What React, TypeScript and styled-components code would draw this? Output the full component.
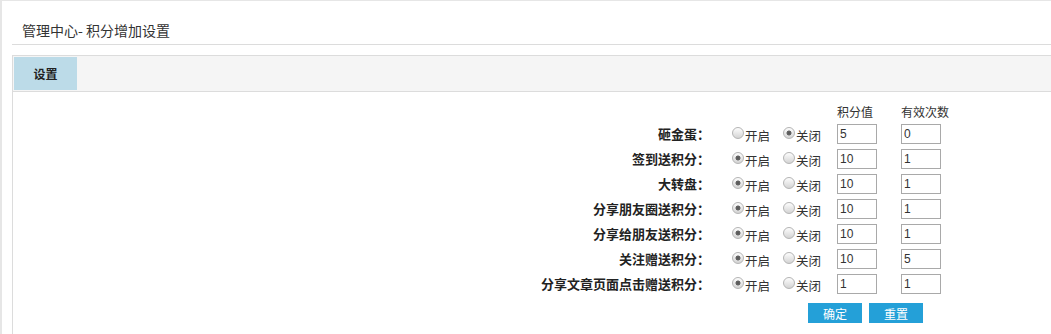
import React from "react";
import styled, { createGlobalStyle } from "styled-components";

const GlobalStyle = createGlobalStyle`
    body {
        margin: 0;
        background: #fff;
        color: #333;
        font-family: "Noto Sans CJK SC", "Liberation Sans", sans-serif;
        font-size: 12px;
    }
`

const Page = styled.div`
    border-top: 1px solid #e6e6e6;
    border-left: 2px solid #e6e6e6;
    padding-left: 10px;
    min-height: 333px;
    box-sizing: border-box;
`

const TitleBar = styled.div`
    padding: 20px 0 5px 10px;
    line-height: 18px;
    font-size: 14px;
    color: #333;
    border-bottom: 1px solid #dcdcdc;
`

const Panel = styled.div`
    margin-top: 10px;
    border-top: 1px solid #dcdcdc;
    border-left: 1px solid #dcdcdc;
    min-height: 278px;
`

const TabBar = styled.div`
    display: flex;
    padding: 1px 0 1px 1px;
    background: #f5f5f5;
    border-bottom: 1px solid #dcdcdc;
`

const Tab = styled.div`
    width: 63px;
    height: 33px;
    line-height: 33px;
    text-align: center;
    font-weight: bold;
    background: #bcdbe8;
    color: #222;
`

const Form = styled.div`
    display: grid;
    grid-template-columns: 1fr 108px 64px 150px;
    grid-template-rows: 18px;
    grid-auto-rows: 25px;
    padding-top: 11px;
`

const HeadCell = styled.div<{ col: number }>`
    grid-column: ${props => props.col};
    line-height: 18px;
`

const Label = styled.div`
    grid-column: 1;
    text-align: right;
    padding-right: 19px;
    font-size: 13px;
    font-weight: bold;
    line-height: 25px;
    color: #222;
`

const RadioGroup = styled.div`
    display: flex;
    align-items: center;
`

const Option = styled.label`
    display: flex;
    align-items: center;
    margin-right: 10px;
    padding-top: 3px;
    font-size: 12.5px;
`

const Radio = styled.input`
    appearance: none;
    width: 12px;
    height: 12px;
    margin: -5px 1px 0 3px;
    border: 1px solid #b4b4b4;
    border-radius: 50%;
    box-sizing: border-box;
    background: linear-gradient(#fdfdfd, #d4d4d4);
    &:checked {
        background: radial-gradient(circle, #555 0, #666 2.2px, transparent 2.8px), linear-gradient(#fdfdfd, #d4d4d4);
    }
`

const InputCell = styled.div`
    display: flex;
    align-items: center;
`

const NumInput = styled.input`
    width: 40px;
    height: 20px;
    box-sizing: border-box;
    border: 1px solid #a9a9a9;
    padding: 0 2px;
    font: 12px "Liberation Sans", sans-serif;
    color: #333;
    outline: none;
`

const Buttons = styled.div`
    grid-column: 2 / span 3;
    display: flex;
    gap: 7px;
    padding: 7px 0 0 79px;
`

const Button = styled.button`
    width: 54px;
    height: 20px;
    border: none;
    background: #24a0d8;
    color: #fff;
    font: 12px "Noto Sans CJK SC", sans-serif;
    padding: 0;
`

const rows = [
    { name: "砸金蛋", on: false, score: "5", times: "0" },
    { name: "签到送积分", on: true, score: "10", times: "1" },
    { name: "大转盘", on: true, score: "10", times: "1" },
    { name: "分享朋友圈送积分", on: true, score: "10", times: "1" },
    { name: "分享给朋友送积分", on: true, score: "10", times: "1" },
    { name: "关注赠送积分", on: true, score: "10", times: "5" },
    { name: "分享文章页面点击赠送积分", on: true, score: "1", times: "1" },
]

export default function App() {
    return (
        <>
            <GlobalStyle />
            <Page>
                <TitleBar>管理中心- 积分增加设置</TitleBar>
                <Panel>
                    <TabBar>
                        <Tab>设置</Tab>
                    </TabBar>
                    <Form>
                        <HeadCell col={3}>积分值</HeadCell>
                        <HeadCell col={4}>有效次数</HeadCell>
                        {rows.map((r, i) => (
                            <React.Fragment key={i}>
                                <Label>{r.name}：</Label>
                                <RadioGroup>
                                    <Option>
                                        <Radio type="radio" name={`r${i}`} defaultChecked={r.on} />开启
                                    </Option>
                                    <Option>
                                        <Radio type="radio" name={`r${i}`} defaultChecked={!r.on} />关闭
                                    </Option>
                                </RadioGroup>
                                <InputCell><NumInput defaultValue={r.score} /></InputCell>
                                <InputCell><NumInput defaultValue={r.times} /></InputCell>
                            </React.Fragment>
                        ))}
                        <Buttons>
                            <Button>确定</Button>
                            <Button>重置</Button>
                        </Buttons>
                    </Form>
                </Panel>
            </Page>
        </>
    )
}
